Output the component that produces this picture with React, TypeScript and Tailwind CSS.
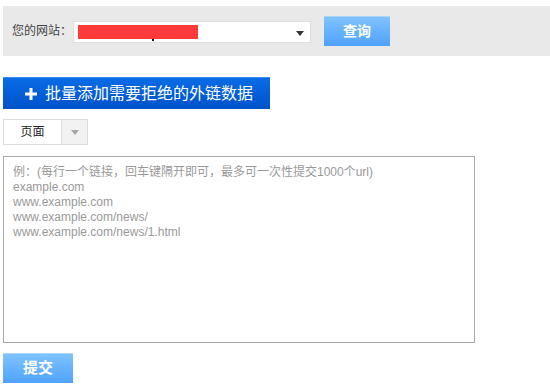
import React from "react";

const cjk = { fontFamily: '"Liberation Sans", "Noto Sans CJK SC", sans-serif' };

export default function App() {
  return (
    <div className="w-[550px] h-[388px] bg-white pl-[3px] pt-[6px]" style={cjk}>
      {/* Site bar */}
      <div className="h-[50px] bg-[#e9e9e9] flex items-center pl-[9px]">
        <span className="text-[12px] text-[#444] w-[61px]">您的网站：</span>
        <div className="relative w-[238px] h-[22px] mt-[2px] bg-white border border-[#dcdcdc] flex items-center pl-[4px]">
          <div className="w-[120px] h-[14px] bg-[#ff3a3a]" />
          <div className="absolute left-[78px] top-[17px] w-[2px] h-[2px] bg-[#113]" />
          <svg className="absolute right-[6px] top-[9px]" width="8" height="5" viewBox="0 0 8 5">
            <polygon points="0,0 8,0 4,5" fill="#333" />
          </svg>
        </div>
        <button className="ml-[13px] w-[66px] h-[30px] border-t border-[#a8d6ff] bg-gradient-to-b from-[#7fc2ff] to-[#4ea2fd] text-white text-[14px] font-bold">
          查询
        </button>
      </div>

      {/* Bulk add */}
      <button className="mt-[21px] w-[267px] h-[32px] flex items-center pl-[22px] gap-[8px] border-t border-[#3b8cf0] bg-gradient-to-b from-[#0b6ce6] to-[#0052c9] text-white text-[16px]">
        <svg width="12" height="12" viewBox="0 0 12 12">
          <rect x="4.5" y="0" width="3" height="12" fill="#fff" />
          <rect x="0" y="4.5" width="12" height="3" fill="#fff" />
        </svg>
        批量添加需要拒绝的外链数据
      </button>

      {/* Type select */}
      <div className="mt-[10px] w-[85px] h-[26px] flex border border-[#dcdcdc]">
        <div className="w-[58px] flex items-center justify-center text-[12px] text-[#222] bg-white border-r border-[#dcdcdc]">
          页面
        </div>
        <div className="flex-1 flex items-center justify-center bg-[#f2f2f2]">
          <svg width="8" height="5" viewBox="0 0 8 5">
            <polygon points="0,0 8,0 4,5" fill="#a6a6a6" />
          </svg>
        </div>
      </div>

      {/* Urls */}
      <textarea
        className="mt-[11px] block w-[472px] h-[187px] border border-[#a9a9a9] resize-none px-[9px] pt-[8px] text-[12px] leading-[15px] text-[#333] placeholder:text-[#999] outline-none"
        style={cjk}
        placeholder={
          "例：(每行一个链接，回车键隔开即可，最多可一次性提交1000个url)\nexample.com\nwww.example.com\nwww.example.com/news/\nwww.example.com/news/1.html"
        }
      />

      <button className="mt-[10px] w-[70px] h-[30px] border-t border-[#a8d6ff] bg-gradient-to-b from-[#7fc2ff] to-[#4ea2fd] text-white text-[15px] font-bold">
        提交
      </button>
    </div>
  );
}
